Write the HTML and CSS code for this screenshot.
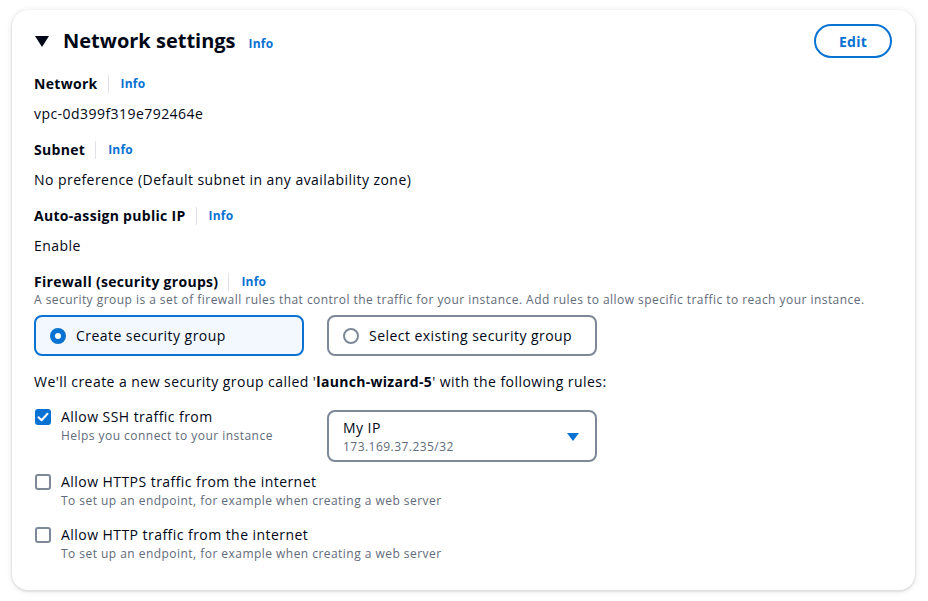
FILE: index.html
```html
<!DOCTYPE html>
<html>
<head>
<meta charset="utf-8">
<link rel="stylesheet" href="styles.css">
</head>
<body>
<div class="page">
  <section class="card">
    <header class="card-head">
      <div class="title-wrap">
        <span class="caret"></span>
        <h2 class="title">Network settings</h2>
        <a class="info info-title">Info</a>
      </div>
      <button class="btn-edit">Edit</button>
    </header>

    <div class="field">
      <div class="label-row"><span class="label">Network</span><span class="sep"></span><a class="info">Info</a></div>
      <div class="value">vpc-0d399f319e792464e</div>
    </div>
    <div class="field">
      <div class="label-row"><span class="label">Subnet</span><span class="sep"></span><a class="info">Info</a></div>
      <div class="value">No preference (Default subnet in any availability zone)</div>
    </div>
    <div class="field">
      <div class="label-row"><span class="label">Auto-assign public IP</span><span class="sep"></span><a class="info">Info</a></div>
      <div class="value">Enable</div>
    </div>
    <div class="field field-fw">
      <div class="label-row"><span class="label">Firewall (security groups)</span><span class="sep"></span><a class="info">Info</a></div>
      <div class="desc">A security group is a set of firewall rules that control the traffic for your instance. Add rules to allow specific traffic to reach your instance.</div>
      <div class="tiles">
        <div class="tile tile-on"><span class="radio radio-on"></span><span>Create security group</span></div>
        <div class="tile"><span class="radio"></span><span>Select existing security group</span></div>
      </div>
    </div>

    <p class="note">We'll create a new security group called '<b>launch-wizard-5</b>' with the following rules:</p>

    <div class="rule rule-ssh">
      <div class="check-wrap">
        <span class="check check-on"><svg viewBox="0 0 16 16" width="16" height="16"><path d="M3.5 8.2 L6.6 11.2 L12.5 4.8" fill="none" stroke="#fff" stroke-width="2" stroke-linecap="round" stroke-linejoin="round"/></svg></span>
        <div class="check-text">
          <div class="check-label">Allow SSH traffic from</div>
          <div class="desc">Helps you connect to your instance</div>
        </div>
      </div>
      <div class="select">
        <div class="select-text">
          <div class="select-main">My IP</div>
          <div class="select-sub">173.169.37.235/32</div>
        </div>
        <svg class="select-caret" viewBox="0 0 12 9" width="12" height="9"><path d="M0 0 H12 L6 8 Z" fill="#0972d3"/></svg>
      </div>
    </div>

    <div class="rule rule-https">
      <div class="check-wrap">
        <span class="check"></span>
        <div class="check-text">
          <div class="check-label">Allow HTTPS traffic from the internet</div>
          <div class="desc">To set up an endpoint, for example when creating a web server</div>
        </div>
      </div>
    </div>

    <div class="rule rule-http">
      <div class="check-wrap">
        <span class="check"></span>
        <div class="check-text">
          <div class="check-label">Allow HTTP traffic from the internet</div>
          <div class="desc">To set up an endpoint, for example when creating a web server</div>
        </div>
      </div>
    </div>
  </section>
</div>
</body>
</html>
```

FILE: styles.css
```css
* { box-sizing: border-box; }
html, body { margin: 0; padding: 0; background: #fff; }
body {
  font-family: "Open Sans", "Liberation Sans", sans-serif;
  color: #000716;
  font-size: 14px;
  letter-spacing: 0.45px;
}
.page { padding: 10px 13px 11px 12px; }
.card {
  background: #fff;
  border-radius: 16px;
  box-shadow: 0 1px 1px 1px rgba(0, 7, 22, 0.06), 0 1px 6px rgba(0, 7, 22, 0.12);
  padding: 14px 23px 28px 22px;
  height: 580px;
}
.card-head {
  display: flex;
  justify-content: space-between;
  align-items: center;
  height: 34px;
}
.title-wrap { display: flex; align-items: center; }
.caret {
  width: 0; height: 0;
  border-left: 7px solid transparent;
  border-right: 7px solid transparent;
  border-top: 11px solid #000716;
  margin-left: 1px;
  margin-right: 14px;
  margin-top: 1px;
}
.title {
  margin: 0;
  font-size: 20px;
  font-weight: 700;
  line-height: 24px;
  letter-spacing: 0;
}
.info {
  color: #0972d3;
  font-size: 12px;
  font-weight: 700;
  line-height: 16px;
  letter-spacing: 0.2px;
  cursor: pointer;
}
.info-title { margin-left: 13px; margin-top: 5px; }
.btn-edit {
  width: 78px;
  height: 34px;
  border: 2px solid #0972d3;
  border-radius: 20px;
  background: #fff;
  color: #0972d3;
  font-family: inherit;
  font-size: 14px;
  font-weight: 700;
  letter-spacing: 0.2px;
  padding: 0;
}
.field { margin-top: 15px; }
.label-row { display: flex; align-items: center; height: 22px; }
.label { font-weight: 700; font-size: 14px; line-height: 22px; letter-spacing: 0.3px; }
.sep {
  width: 1px;
  height: 18px;
  background: #dee1e6;
  margin: 0 12px 0 10px;
}
.value { margin-top: 9px; line-height: 20px; }
.desc {
  color: #5f6b7a;
  font-size: 12px;
  line-height: 16px;
  white-space: nowrap;
  letter-spacing: 0.46px;
}
.field-fw .desc { margin-top: -1px; }
.tiles { display: flex; gap: 23px; margin-top: 7px; }
.tile {
  width: 270px;
  height: 41px;
  border: 2px solid #7d8998;
  border-radius: 8px;
  display: flex;
  align-items: center;
  padding-left: 14px;
  gap: 10px;
  line-height: 20px;
}
.tile-on { background: #f2f8fd; border-color: #0972d3; }
.radio {
  width: 16px; height: 16px;
  border-radius: 50%;
  border: 2px solid #7d8998;
  background: #fff;
  flex: none;
}
.radio-on { border: 5px solid #0972d3; }
.note { margin: 16px 0 0; line-height: 20px; }
.note b { font-weight: 700; letter-spacing: 0.3px; }
.rule { display: flex; align-items: flex-start; }
.rule-ssh { margin-top: 15px; }
.rule-https { margin-top: 10px; }
.rule-http { margin-top: 16px; }
.check-wrap { display: flex; align-items: flex-start; width: 293px; flex: none; }
.check {
  width: 16px; height: 16px;
  border: 2px solid #7d8998;
  border-radius: 3px;
  margin: 2px 10px 0 1px;
  flex: none;
  display: flex;
}
.check-on { background: #0972d3; border: none; }
.check-label { line-height: 20px; white-space: nowrap; }
.check-text .desc { margin-top: 1px; }
.select {
  margin-top: 3px;
  width: 270px;
  height: 52px;
  border: 2px solid #7d8998;
  border-radius: 8px;
  display: flex;
  align-items: center;
  justify-content: space-between;
  padding: 0 16px 0 14px;
}
.select-main { line-height: 20px; }
.select-sub { color: #5f6b7a; font-size: 12px; line-height: 16px; margin-top: 1px; letter-spacing: 0.46px; }
.select-caret { margin-top: 2px; }
```
